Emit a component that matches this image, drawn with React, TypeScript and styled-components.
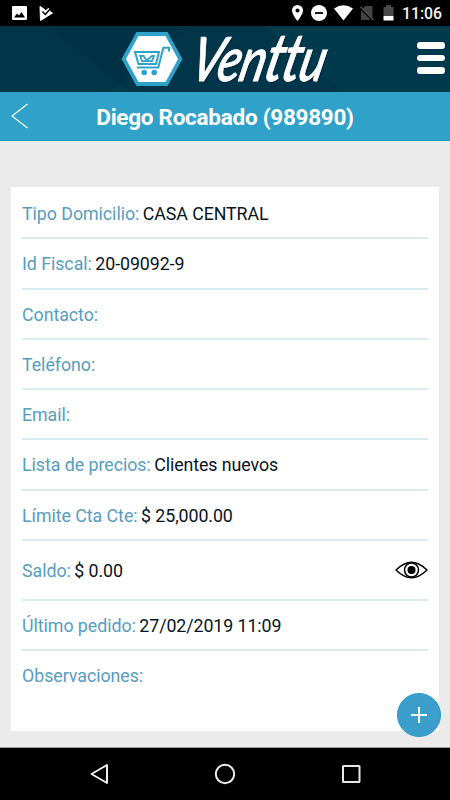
import React from 'react';
import styled, { createGlobalStyle } from 'styled-components';

const Global = createGlobalStyle`
  * { box-sizing: border-box; }
  body { margin: 0; background: #ebebeb; }
  svg { display: block; flex: none; }
`;

const Screen = styled.div`
  position: relative;
  width: 450px;
  height: 800px;
  display: flex;
  flex-direction: column;
  overflow: hidden;
  background: #ebebeb;
  font-family: Roboto, 'Liberation Sans', sans-serif;
`;

const StatusBar = styled.div`
  height: 26px;
  flex: none;
  display: flex;
  align-items: center;
  justify-content: space-between;
  padding: 0 9px 0 12px;
  background: #000;
  color: #fff;
`;

const StatusGroup = styled.div<{ $gap: number }>`
  display: flex;
  align-items: center;
  gap: ${(p) => p.$gap}px;
`;

const Clock = styled.span`
  width: 39px;
  font-size: 15.8px;
  line-height: 26px;
  font-weight: 500;
  white-space: nowrap;
  padding-top: 2px;
  color: #f4f4f4;
`;

const BrandBar = styled.header`
  height: 66px;
  flex: none;
  display: grid;
  grid-template-columns: 121px 62px 5px 1fr 28px;
  align-items: center;
  padding-right: 5px;
  background:
    linear-gradient(38deg, rgba(0, 62, 80, 0.35) 0 24%, transparent 24.2%),
    linear-gradient(142deg, rgba(0, 22, 38, 0.15) 0 36%, transparent 36.2%),
    linear-gradient(40deg, transparent 0 65%, rgba(0, 75, 92, 0.18) 65.2%),
    #01364a;
`;

const Wordmark = styled.span`
  grid-column: 4;
  width: 180px;
  height: 66px;
  font-family: Lato, sans-serif;
  font-size: 61px;
  line-height: 64px;
  font-style: italic;
  font-weight: 500;
  letter-spacing: -1px;
  color: #fff;
  white-space: nowrap;
  -webkit-text-stroke: 0.8px #fff;
  transform: scaleX(0.79) skewX(-17deg);
  transform-origin: 0 55px;
  text-shadow: 1px 1px 1px #00172a;
`;

const TallLetters = styled.span`
  font-size: 67px;
  line-height: 0;
  letter-spacing: -2px;
`;

const MenuButton = styled.button`
  grid-column: 5;
  display: flex;
  flex-direction: column;
  gap: 6.4px;
  padding: 0;
  margin-bottom: 2px;
  border: 0;
  background: none;
`;

const MenuLine = styled.span`
  width: 28px;
  height: 6.2px;
  border-radius: 3px;
  background: #fff;
  box-shadow: 0 0 1px #00172a;
`;

const TitleBar = styled.div`
  height: 49px;
  flex: none;
  display: grid;
  grid-template-columns: 40px 1fr 40px;
  align-items: center;
  background: #30a2c9;
  border-bottom: 1px solid #199bc6;
`;

const BackButton = styled.button`
  padding: 0 0 0 11px;
  border: 0;
  background: none;
`;

const Title = styled.h1`
  margin: 2px 0 0;
  text-align: center;
  font-size: 22.5px;
  line-height: 28px;
  font-weight: 700;
  letter-spacing: -0.27px;
  color: #fff;
  white-space: nowrap;
`;

const Card = styled.main`
  height: 544px;
  margin: 46px 11px 0;
  padding: 2px 11px 0;
  background: #fff;
`;

const Row = styled.div<{ $height: number; $last?: boolean }>`
  height: ${(p) => p.$height}px;
  display: flex;
  align-items: center;
  padding-top: ${(p) => (p.$last ? 0 : 1)}px;
  border-bottom: 2px solid ${(p) => (p.$last ? 'transparent' : '#d7ebf1')};
  font-size: 17.8px;
  white-space: nowrap;
`;

const Label = styled.span`
  color: #579dbe;
  letter-spacing: -0.04px;
`;

const Value = styled.span`
  margin-left: 3.5px;
  letter-spacing: -0.08px;
  color: #06141d;
`;

const EyeButton = styled.button`
  margin-left: auto;
  padding: 0;
  border: 0;
  background: none;
`;

const AddButton = styled.button`
  position: absolute;
  right: 9px;
  bottom: 63px;
  width: 44px;
  height: 44px;
  display: flex;
  align-items: center;
  justify-content: center;
  padding: 0;
  border: 1px solid #2499c6;
  border-radius: 50%;
  background: #3c9fcb;
`;

const NavBar = styled.nav`
  height: 53px;
  margin-top: auto;
  flex: none;
  display: grid;
  grid-template-columns: 162px 126px 162px;
  align-items: center;
  border-top: 1px solid #a0a0a0;
  background: #000;
`;

const NavButton = styled.button<{ $side: 'left' | 'center' | 'right' }>`
  display: flex;
  justify-content: ${(p) => ({ left: 'flex-end', center: 'center', right: 'flex-start' })[p.$side]};
  padding: ${(p) => ({ left: '0 53px 0 0', center: '0', right: '0 0 0 53px' })[p.$side]};
  border: 0;
  background: none;
`;

const CartLogo = () => (
  <svg width="62" height="56" viewBox="0 0 62 56">
    <path d="M15.5 1H46.5L61.5 28L46.5 55H15.5L0.5 28Z" fill="#30a2c9" />
    <path d="M17.5 5H44.5L57 28L44.5 51H17.5L5 28Z" fill="#fff" />
    <g fill="none" stroke="#30a2c9" strokeWidth="2">
      <path d="M48 20.5V16.7H42.3L37.3 36.5H16" />
      <path d="M38 21H14L17.5 33H35Z" />
      <path d="M23.5 24.8H19.2L21 30.2H31L33 24.8H31L25.8 29.5L22.5 25" strokeWidth="1.8" />
    </g>
    <circle cx="23.2" cy="41.5" r="2.8" fill="#30a2c9" />
    <circle cx="33.2" cy="41.5" r="2.8" fill="#30a2c9" />
  </svg>
);

const fields = [
  { label: 'Tipo Domicilio:', value: 'CASA CENTRAL' },
  { label: 'Id Fiscal:', value: '20-09092-9' },
  { label: 'Contacto:' },
  { label: 'Teléfono:' },
  { label: 'Email:' },
  { label: 'Lista de precios:', value: 'Clientes nuevos' },
  { label: 'Límite Cta Cte:', value: '$ 25,000.00' },
  { label: 'Saldo:', value: '$ 0.00', eye: true },
  { label: 'Último pedido:', value: '27/02/2019 11:09' },
  { label: 'Observaciones:', last: true },
];

export default function App() {
  return (
    <>
      <Global />
      <Screen>
        <StatusBar>
          <StatusGroup $gap={12}>
            <svg width="15" height="14" viewBox="0 0 15 14">
              <rect width="15" height="14" rx="1.2" fill="#fff" />
              <path d="M2 11.5L5 7.5L7 9.5L9.5 6L13 11.5Z" fill="#000" />
            </svg>
            <svg width="15" height="15" viewBox="0 0 15 15">
              <path d="M1 .5L5 3L6.5 5L9 2.5L11 3.5L10.5 5.2L13.5 7L1.5 14.5Z" fill="#fff" stroke="#fff" strokeLinejoin="round" />
              <path d="M3.5 5.5L6.3 8.5L11.5 2.5" fill="none" stroke="#000" strokeWidth="1.5" />
            </svg>
          </StatusGroup>
          <StatusGroup $gap={8.3}>
            <svg width="11" height="16" viewBox="0 0 11 16">
              <path d="M5.5 0A5.5 5.5 0 0 0 0 5.5C0 9.5 5.5 16 5.5 16S11 9.5 11 5.5A5.5 5.5 0 0 0 5.5 0Z" fill="#fff" />
              <circle cx="5.5" cy="5.5" r="2" fill="#000" />
            </svg>
            <svg width="16" height="16" viewBox="0 0 16 16">
              <circle cx="8" cy="8" r="8" fill="#fff" />
              <path d="M4 8H12" stroke="#000" strokeWidth="1.8" />
            </svg>
            <svg width="17" height="16" viewBox="1 0 17 16" overflow="visible">
              <path d="M9.5 15.5L0 3.5Q9.5 -3 19 3.5Z" fill="#fff" />
            </svg>
            <svg width="14" height="16" viewBox="0 0 14 16">
              <path d="M5 1H12.5V14L3 4ZM1 5L11 15H1Z" fill="#424242" />
              <path d="M.5 1.5L13.5 15" stroke="#555" strokeWidth="1.2" />
            </svg>
            <svg width="11" height="16" viewBox="0 0 11 16">
              <path d="M3 0H8V2H10.5V11H.5V2H3Z" fill="#4a4a4a" />
              <path d="M.5 11H10.5V15.5H.5Z" fill="#fff" />
            </svg>
            <Clock>11:06</Clock>
          </StatusGroup>
        </StatusBar>
        <BrandBar>
          <span />
          <CartLogo />
          <Wordmark>
            Ven<TallLetters>tt</TallLetters>u
          </Wordmark>
          <MenuButton aria-label="Menú">
            <MenuLine />
            <MenuLine />
            <MenuLine />
          </MenuButton>
        </BrandBar>
        <TitleBar>
          <BackButton aria-label="Volver">
            <svg width="17" height="26" viewBox="0 0 17 26">
              <path d="M16.5 1L1 13L16.5 25" fill="none" stroke="#fff" strokeWidth="1.1" />
            </svg>
          </BackButton>
          <Title>Diego Rocabado (989890)</Title>
        </TitleBar>
        <Card>
          {fields.map((f) => (
            <Row key={f.label} $height={f.eye ? 60 : 50.28} $last={f.last}>
              <Label>{f.label}</Label>
              {f.value && <Value>{f.value}</Value>}
              {f.eye && (
                <EyeButton aria-label="Ver saldo">
                  <svg width="33" height="18" viewBox="0 0 33 18">
                    <path d="M1 9Q9 1.2 16.5 1.2T32 9Q24 16.8 16.5 16.8T1 9Z" fill="#fff" stroke="#000" strokeWidth="1.4" />
                    <circle cx="16.5" cy="9" r="7" fill="none" stroke="#000" strokeWidth="1.5" />
                    <circle cx="16.5" cy="9" r="4" fill="#000" />
                  </svg>
                </EyeButton>
              )}
            </Row>
          ))}
        </Card>
        <NavBar>
          <NavButton $side="left" aria-label="Atrás">
            <svg width="19" height="22" viewBox="0 0 19 22">
              <path d="M17 2V20L1.5 11Z" fill="none" stroke="#eee" strokeWidth="2" strokeLinejoin="round" />
            </svg>
          </NavButton>
          <NavButton $side="center" aria-label="Inicio">
            <svg width="22" height="22" viewBox="0 0 22 22">
              <circle cx="11" cy="11" r="9.2" fill="none" stroke="#eee" strokeWidth="2" />
            </svg>
          </NavButton>
          <NavButton $side="right" aria-label="Recientes">
            <svg width="20" height="20" viewBox="0 0 20 20">
              <rect x="2" y="2" width="16.5" height="16" rx=".5" fill="none" stroke="#e8e8e8" strokeWidth="2" />
            </svg>
          </NavButton>
        </NavBar>
        <AddButton aria-label="Agregar">
          <svg width="16" height="16" viewBox="0 0 16 16">
            <path d="M8 0V16M0 8H16" stroke="#fff" strokeWidth="2" />
          </svg>
        </AddButton>
      </Screen>
    </>
  );
}
